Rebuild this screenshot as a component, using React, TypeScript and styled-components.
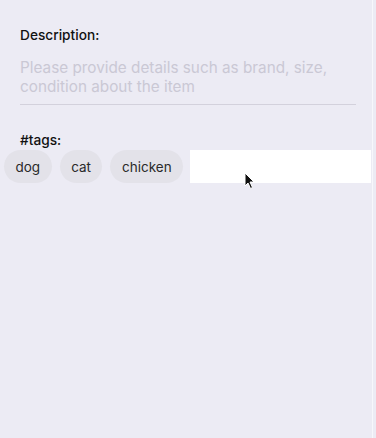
import React, { useState } from "react";
import styled, { createGlobalStyle } from "styled-components";

const GlobalStyle = createGlobalStyle`
    html, body {
        margin: 0;
        padding: 0;
        background-color: #ecebf4;
        font-family: Inter, "Open Sans", sans-serif;
    }
`;

const Page = styled.div`
    position: relative;
    width: 376px;
    height: 438px;
    box-sizing: border-box;
    padding-top: 25px;
    background-color: #ecebf4;
    overflow: hidden;
`;

const EdgeLine = styled.div`
    position: absolute;
    top: 0;
    right: 3px;
    width: 1px;
    height: 100%;
    background-color: #f7f7fb;
`;

const Field = styled.div`
    display: flex;
    flex-direction: column;
    padding: 0 20px;
`;

const Label = styled.label`
    color: #111111;
    font-size: 13.7px;
    font-weight: 500;
    line-height: 20px;
`;

const DescInput = styled.textarea`
    margin-top: 13px;
    height: 41px;
    padding: 0 0 5px;
    border: none;
    border-bottom: 1px solid #d3d1dc;
    background-color: transparent;
    font-family: Inter, "Open Sans", sans-serif;
    font-size: 15.3px;
    line-height: 19px;
    resize: none;
    outline: none;
    color: #222222;
    &::placeholder {
        color: #cac8d4;
    }
`;

const TagsLabel = styled(Label)`
    margin-top: 25px;
`;

const TagsRow = styled.div`
    display: flex;
    align-items: center;
    gap: 8px;
    padding: 0 5px 0 4px;
`;

const Tag = styled.span`
    display: flex;
    align-items: center;
    height: 33px;
    padding: 0 11.5px;
    border-radius: 17px;
    background-color: #e3e2e9;
    color: #2a2a2a;
    font-size: 13.5px;
`;

const TagInput = styled.input`
    flex: 1;
    min-width: 0;
    height: 33px;
    margin-left: -1px;
    padding: 0 8px;
    border: none;
    background-color: #ffffff;
    outline: none;
    font-size: 14px;
`;

const Pointer = styled.svg`
    position: absolute;
    left: 244px;
    top: 172px;
`;

const App = () => {
    const [tags] = useState(["dog", "cat", "chicken"]);
    return (
        <>
            <GlobalStyle />
            <Page>
                <Field>
                    <Label>Description:</Label>
                    <DescInput placeholder="Please provide details such as brand, size, condition about the item" />
                    <TagsLabel>#tags:</TagsLabel>
                </Field>
                <TagsRow>
                    {tags.map((tag) => (
                        <Tag key={tag}>{tag}</Tag>
                    ))}
                    <TagInput type="text" />
                </TagsRow>
                <EdgeLine />
                <Pointer width="12" height="18" viewBox="0 0 12 18">
                    <path
                        d="M1 1 L1 14 L4 11 L6.5 16.5 L8.5 15.5 L6 10 L10 10 Z"
                        fill="#111"
                        stroke="#fff"
                        strokeWidth="1"
                    />
                </Pointer>
            </Page>
        </>
    );
};

export default App;
